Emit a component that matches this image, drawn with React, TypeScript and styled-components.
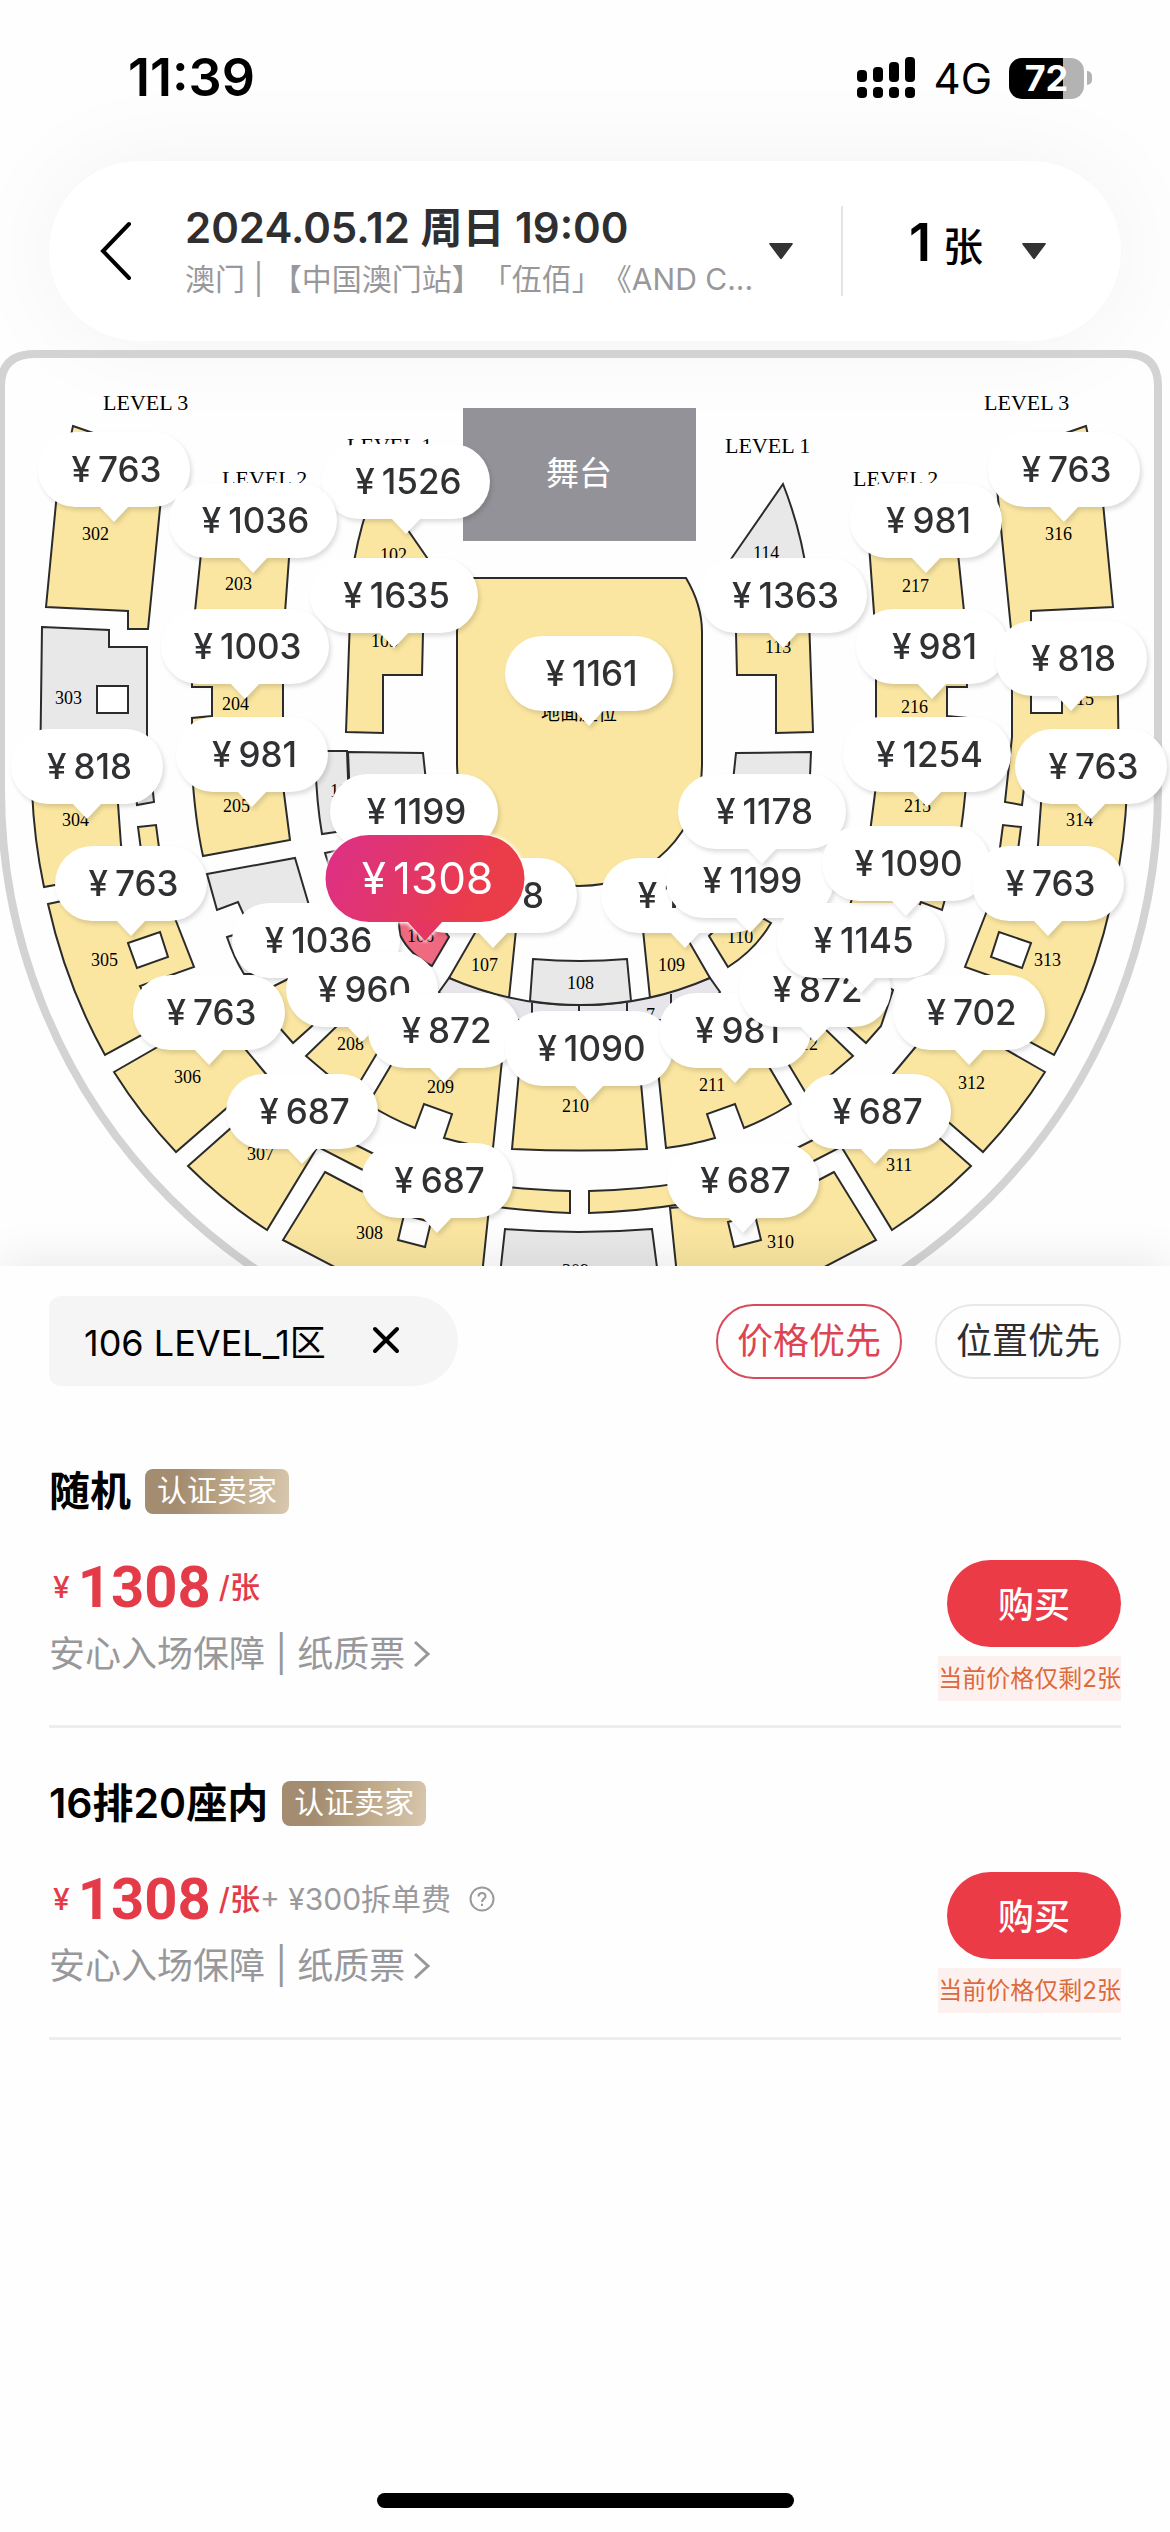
import React, { useState } from "react";
import styled, { createGlobalStyle, css } from "styled-components";

const GlobalStyle = createGlobalStyle`
  * { box-sizing: border-box; }
  body { margin: 0; background: #fefefe; }
  button { font: inherit; color: inherit; border: 0; padding: 0; background: none; cursor: pointer; }
  h2, p { margin: 0; }
`;

const Page = styled.main`
  min-height: 100vh;
  display: flex;
  flex-direction: column;
  background: #fefefe;
  color: #000;
  font-family: Inter, "Noto Sans CJK SC", sans-serif;
  overflow: hidden;
`;

/* ---------- status bar ---------- */

const StatusBar = styled.div`
  height: 161px;
  padding: 42px 78px 0 128px;
  display: flex;
  justify-content: space-between;
  align-items: flex-start;
`;

const Clock = styled.time`
  font-size: 52px;
  line-height: 72px;
  font-weight: 600;
`;

const StatusIcons = styled.div`
  height: 72px;
  display: flex;
  align-items: center;
  gap: 17px;
  font-size: 42px;
`;

const Battery = styled.span`
  display: flex;
  align-items: center;
  gap: 3px;
`;

const BatteryCell = styled.span<{ $level: number }>`
  width: 75px;
  height: 41px;
  border-radius: 13px;
  background: linear-gradient(to right, #000 ${(p) => p.$level}%, #b3b3b3 ${(p) => p.$level}%);
  color: #fff;
  font-size: 36px;
  line-height: 41px;
  font-weight: 700;
  text-align: center;
`;

const BatteryNub = styled.span`
  width: 5px;
  height: 14px;
  border-radius: 0 5px 5px 0;
  background: #b3b3b3;
`;

/* ---------- header card ---------- */

const Header = styled.header`
  margin: 0 49px;
  height: 180px;
  padding: 0 75px 0 48px;
  border-radius: 90px;
  background: #fff;
  box-shadow: 0 0 100px rgba(0, 0, 0, 0.05);
  display: flex;
  align-items: center;
`;

const BackButton = styled.button`
  width: 88px;
  height: 88px;
  flex: none;
  display: flex;
  align-items: center;
`;

const SessionButton = styled.button`
  flex: 1;
  min-width: 0;
  display: flex;
  align-items: center;
  gap: 12px;
  text-align: left;
`;

const SessionText = styled.span`
  flex: 1;
  min-width: 0;
  padding-top: 2px;
  display: flex;
  flex-direction: column;
`;

const SessionDate = styled.span`
  font-size: 42px;
  line-height: 54px;
  font-weight: 600;
  color: #2f2f31;
`;

const SessionName = styled.span`
  font-size: 30px;
  line-height: 48px;
  color: #98989b;
  white-space: nowrap;
  text-spacing-trim: space-all;
`;

const HeaderRule = styled.span`
  width: 2px;
  height: 90px;
  margin: 0 66px 0 48px;
  background: #e4e4e4;
`;

const CountButton = styled.button`
  display: flex;
  align-items: center;
  gap: 39px;
`;

const Count = styled.span`
  display: flex;
  align-items: baseline;
  gap: 12px;
  font-size: 40px;
  line-height: 72px;
  font-weight: 500;
  padding-bottom: 12px;

  b {
    font-size: 52px;
    font-weight: 600;
  }
`;

/* ---------- seat map ---------- */

const MapView = styled.section`
  margin-top: 9px;
  display: flex;
  justify-content: center;
  overflow: hidden;
`;

const MapCanvas = styled.div`
  position: relative;
  flex: none;
  width: 1170px;
  height: 916px;

  svg {
    display: block;
  }
`;

const Pin = styled.button<{ $x: number; $y: number; $wide: boolean; $active: boolean }>`
  position: absolute;
  left: ${(p) => p.$x}px;
  top: ${(p) => p.$y}px;
  transform: translateX(-50%);
  width: ${(p) => (p.$wide ? 168 : 152)}px;
  height: 75px;
  padding-left: 5px;
  border-radius: 38px;
  background: #fff;
  color: #303133;
  display: flex;
  justify-content: center;
  align-items: center;
  gap: 7px;
  font-size: 35px;
  line-height: 75px;
  font-weight: 500;
  white-space: nowrap;
  filter: drop-shadow(2px 3px 2px rgba(0, 0, 0, 0.13));

  &::after {
    content: "";
    position: absolute;
    left: 50%;
    top: 100%;
    width: 30px;
    height: 16px;
    margin: -1px 0 0 -15px;
    background: inherit;
    clip-path: polygon(0 0, 100% 0, 50% 100%);
  }

  ${(p) =>
    p.$active &&
    css`
      width: 199px;
      height: 87px;
      border-radius: 44px;
      background: linear-gradient(115deg, #dc2f88 0%, #e2366a 40%, #eb3c4a 75%);
      color: #fff;
      font-size: 44px;
      font-weight: 400;
      z-index: 1;
      filter: drop-shadow(0 0 2px #fff) drop-shadow(0 0 1px #fff);

      &::after {
        width: 36px;
        height: 20px;
        margin-left: -18px;
        background: #e43660;
      }
    `}
`;

/* ---------- offers ---------- */

const Panel = styled.section`
  position: relative;
  z-index: 2;
  flex: 1;
  padding: 30px 49px 24px;
  background: #fefefe;
  box-shadow: 0 -4px 44px rgba(0, 0, 0, 0.09);
  display: flex;
  flex-direction: column;
  gap: 30px;
`;

const Filters = styled.div`
  display: flex;
  align-items: center;
  gap: 33px;
`;

const AreaChip = styled.span`
  height: 90px;
  margin-right: auto;
  padding: 0 58px 2px 35px;
  border-radius: 12px 45px 45px 12px;
  background: #f5f5f5;
  display: flex;
  align-items: center;
  gap: 46px;
  font-size: 36px;
`;

const ClearButton = styled.button`
  display: flex;
`;

const SortButton = styled.button<{ $on: boolean }>`
  width: 186px;
  height: 75px;
  border: 2px solid ${(p) => (p.$on ? "#d94a5c" : "#e8e8e8")};
  border-radius: 38px;
  color: ${(p) => (p.$on ? "#dc4453" : "#2e2e30")};
  font-size: 36px;
  line-height: 71px;
`;

const OfferList = styled.ul`
  margin: 0;
  padding: 0;
  list-style: none;
`;

const Offer = styled.li`
  padding: 53px 0 24px;
  border-bottom: 3px solid #ededed;
  display: flex;
  flex-direction: column;
  gap: 46px;
`;

const OfferTitle = styled.div`
  height: 45px;
  display: flex;
  align-items: center;
  gap: 14px;

  h2 {
    font-size: 41px;
    line-height: 45px;
    font-weight: 600;
  }
`;

const SellerBadge = styled.span`
  height: 45px;
  padding: 0 12px;
  border-radius: 8px;
  background: linear-gradient(100deg, #a38c70 25%, #bfa98a 60%, #d8c8ae);
  color: #fff;
  font-size: 30px;
  line-height: 43px;
`;

const OfferBody = styled.div`
  display: flex;
  justify-content: space-between;
`;

const OfferInfo = styled.div`
  display: flex;
  flex-direction: column;
  align-items: flex-start;
  gap: 16px;
`;

const PriceLine = styled.p`
  height: 54px;
  display: flex;
  align-items: center;
  padding-left: 4px;
  color: #e43b49;
  font-size: 30px;
  line-height: 54px;
  font-weight: 500;
`;

const Amount = styled.strong`
  margin: 0 8px;
  font-family: Roboto, sans-serif;
  font-size: 58px;
  font-weight: 700;
`;

const Fee = styled.span`
  color: #9a9a9d;
  font-weight: 400;
`;

const HelpButton = styled.button`
  margin-left: 18px;
  display: flex;
`;

const Guarantee = styled.button`
  display: flex;
  align-items: center;
  gap: 8px;
  color: #98989b;
  font-size: 36px;
  line-height: 48px;
`;

const Purchase = styled.div`
  display: flex;
  flex-direction: column;
  align-items: flex-end;
  gap: 9px;
`;

const BuyButton = styled.button`
  width: 174px;
  height: 87px;
  padding-bottom: 4px;
  border-radius: 44px;
  background: #eb3b47;
  color: #fff;
  font-size: 36px;
  font-weight: 500;
`;

const StockNote = styled.span`
  height: 45px;
  background: #fdf1ef;
  color: #dd6a3c;
  font-size: 24px;
  line-height: 45px;
`;

const HomeIndicator = styled.div`
  width: 417px;
  height: 15px;
  margin: auto auto 0;
  border-radius: 8px;
  background: #000;
`;

/* ---------- data ---------- */

const SEAT = "#fae6a1";
const EMPTY = "#e8e8e8";
const CHOSEN = "#ef6a80";

// Outlines for the left half of the hall; the right half is the same set mirrored.
const sections: { d: string; left: string | null; right: string | null }[] = [
  { d: "M73 426 165 458 148 629H128V611L46 607 56 503Z", left: SEAT, right: SEAT },
  { d: "M42 627 109 630V647H147V737L154 802 137 805 134 780H40Z", left: EMPTY, right: SEAT },
  { d: "M97 686H128V713H97Z", left: "#fff", right: "#fff" },
  { d: "M32 790H117L121 845 125 872 44 887Q34 840 32 790Z", left: SEAT, right: SEAT },
  { d: "M138 827 156 825 162 870 144 873Z", left: SEAT, right: SEAT },
  { d: "M48 904 160 880 176 921 194 967 140 986 160 1025 105 1055Q66 985 48 904Z", left: SEAT, right: SEAT },
  { d: "M128 943 160 932 168 957 137 968Z", left: "#fff", right: "#fff" },
  { d: "M114 1072 175 1037 236 1038 266 1074 176 1152Q141 1115 114 1072Z", left: SEAT, right: SEAT },
  { d: "M188 1166 240 1120 318 1146 267 1230Q225 1203 188 1166Z", left: SEAT, right: SEAT },
  { d: "M325 1172 361 1191 400 1200 489 1208 482 1275H350L283 1240Z", left: SEAT, right: SEAT },
  { d: "M336 1135 372 1153Q450 1188 570 1191V1213Q440 1208 361 1169L318 1147Z", left: SEAT, right: SEAT },
  { d: "M404 1215 398 1240 425 1247 431 1222Z", left: "#fff", right: "#fff" },
  { d: "M205 515H292L289 558 283 640H192Z", left: SEAT, right: SEAT },
  { d: "M192 650H283V730H192V718L212 716V687H192Z", left: SEAT, right: SEAT },
  { d: "M192 770H281L290 840 203 856Q195 820 192 770Z", left: SEAT, right: SEAT },
  { d: "M207 874 295 858 308 902 320 940H255L238 902 217 910Z", left: EMPTY, right: SEAT },
  { d: "M227 937 250 930 270 974H244Q234 958 227 937Z", left: EMPTY, right: null },
  { d: "M266 990 300 973 325 1010 312 1026 293 1043 278 1026Z", left: SEAT, right: SEAT },
  { d: "M306 1056 340 1023 388 1035 352 1095Z", left: SEAT, right: SEAT },
  { d: "M368 1104 400 1050H503L493 1148Q468 1145 444 1138L452 1114 424 1104 415 1128Q390 1118 368 1104Z", left: SEAT, right: SEAT },
  { d: "M376 484 430 562V575H352Q358 530 376 484Z", left: SEAT, right: EMPTY },
  { d: "M351 590H424L422 675H383V733L346 732Z", left: SEAT, right: SEAT },
  { d: "M348 752 423 753 428 800H350Z", left: EMPTY, right: EMPTY },
  { d: "M315 751H347L350 830 322 834Q316 800 315 751Z", left: EMPTY, right: null },
  { d: "M325 853 360 846 380 900H340Z", left: EMPTY, right: null },
  { d: "M449 978 475 933 478 920H517L509 998Q478 993 449 978Z", left: SEAT, right: SEAT },
];

const singles: { d: string; fill: string }[] = [
  { d: "M449 978Q515 1006 579 1005 645 1006 710 978L720 992 700 1020H455L439 992Z", fill: "#e7e5e9" },
  { d: "M532 1003V1020M579 1005V1020M627 1003V1020M671 994V1010", fill: "none" },
  { d: "M533 959Q580 963 627 959L631 1001Q580 1009 530 1001Z", fill: EMPTY },
  { d: "M398 912 430 910 449 937 432 966Q410 955 400 935Z", fill: CHOSEN },
  { d: "M709 936 728 967Q755 950 771 923L764 919 730 915Z", fill: SEAT },
  { d: "M521 1050H638L647 1149Q580 1152 512 1149Z", fill: SEAT },
  { d: "M505 1229Q579 1235 652 1229L658 1275H500Z", fill: EMPTY },
  {
    d: "M472 578H686Q702 605 702 632V765C702 830 650 886 579 886 508 886 457 830 457 765V632Q457 605 472 578Z",
    fill: SEAT,
  },
];

const labels: [number, number, string][] = [
  [82, 540, "302"], [1045, 540, "316"], [225, 590, "203"], [902, 592, "217"],
  [55, 704, "303"], [1067, 705, "315"], [222, 710, "204"], [901, 713, "216"],
  [223, 812, "205"], [904, 812, "215"], [380, 561, "102"], [753, 559, "114"],
  [371, 647, "103"], [765, 653, "113"], [62, 826, "304"], [1066, 826, "314"],
  [91, 966, "305"], [1034, 966, "313"], [174, 1083, "306"], [958, 1089, "312"],
  [247, 1160, "307"], [886, 1171, "311"], [356, 1239, "308"], [767, 1248, "310"],
  [337, 1050, "208"], [791, 1050, "212"], [427, 1093, "209"], [699, 1091, "211"],
  [562, 1112, "210"], [562, 1277, "309"], [330, 797, "104"], [407, 942, "106"],
  [471, 971, "107"], [567, 989, "108"], [658, 971, "109"], [727, 943, "110"],
  [646, 1021, "7"],
];

const levels: [number, number, string][] = [
  [103, 410, "LEVEL 3"], [222, 486, "LEVEL 2"], [347, 453, "LEVEL 1"],
  [725, 453, "LEVEL 1"], [853, 486, "LEVEL 2"], [984, 410, "LEVEL 3"],
];

const MAP_TOP = 350;

// Tip x, bubble top, price; later pins lie over earlier ones.
const pins: [number, number, number][] = [
  [114, 432, 763], [406, 444, 1526], [253, 483, 1036], [394, 558, 1635],
  [245, 609, 1003], [252, 717, 981], [87, 729, 818], [414, 774, 1199],
  [589, 636, 1161], [783, 558, 1363], [926, 483, 981], [1064, 432, 763],
  [932, 609, 981], [1071, 621, 818], [927, 717, 1254], [1091, 729, 763],
  [493, 858, 1178], [685, 858, 1199], [750, 843, 1199], [762, 774, 1178],
  [316, 903, 1036], [362, 952, 960], [444, 993, 872], [589, 1011, 1090],
  [735, 993, 981], [815, 952, 872], [861, 903, 1145], [906, 826, 1090],
  [131, 846, 763], [209, 975, 763], [302, 1074, 687], [437, 1143, 687],
  [743, 1143, 687], [875, 1074, 687], [969, 975, 702], [1048, 846, 763],
];

const offers = [
  { title: "随机", price: 1308, fee: 0, left: 2 },
  { title: "16排20座内", price: 1308, fee: 300, left: 2 },
];

/* ---------- parts ---------- */

const Caret = () => (
  <svg width="24" height="17" viewBox="0 0 24 17" aria-hidden="true">
    <path d="M1 0H23Q24.500 0 23.500 1.500L13 15.500Q12 17 11 15.500L.5 1.500Q-.5 0 1 0Z" fill="#333" />
  </svg>
);

const Signal = () => (
  <svg width="60" height="42" viewBox="0 0 60 42" aria-hidden="true">
    {[13, 10, 5, 0].map((top, i) => (
      <g key={top}>
        <rect x={i * 16} y={top} width="10" height={25 - top} rx="4" />
        <rect x={i * 16} y="30" width="10" height="11" rx="4" />
      </g>
    ))}
  </svg>
);

function Hall() {
  return (
    <svg width="1170" height="916" viewBox="0 350 1170 916" aria-label="座位图">
      <path
        d="M1 790V386Q1 354 35 354H1126Q1158 354 1158 386V790A578.500 578.500 0 0 1 1 790Z"
        fill="none"
        stroke="#d3d3d3"
        strokeWidth="8"
      />
      <g stroke="#2b2b2b" strokeWidth="2">
        {sections.map((s) => s.left && <path key={s.d} d={s.d} fill={s.left} />)}
        <g transform="translate(1159 0) scale(-1 1)">
          {sections.map((s) => s.right && <path key={s.d} d={s.d} fill={s.right} />)}
        </g>
        {singles.map((s) => (
          <path key={s.d} d={s.d} fill={s.fill} />
        ))}
      </g>
      <rect x="463" y="408" width="233" height="133" fill="#939299" />
      <text x="579" y="485" fontSize="33" fill="#fff" textAnchor="middle">
        舞台
      </text>
      <text x="579" y="720" fontSize="19" textAnchor="middle">
        地面座位
      </text>
      <g fontFamily='"Liberation Serif", serif' fontSize="18">
        {labels.map(([x, y, t]) => (
          <text key={t} x={x} y={y}>
            {t}
          </text>
        ))}
      </g>
      <g fontFamily='"Liberation Serif", serif' fontSize="22">
        {levels.map(([x, y, t]) => (
          <text key={x} x={x} y={y}>
            {t}
          </text>
        ))}
      </g>
    </svg>
  );
}

export default function App() {
  const [sort, setSort] = useState("价格优先");

  return (
    <Page>
      <GlobalStyle />
      <StatusBar>
        <Clock>11:39</Clock>
        <StatusIcons>
          <Signal />
          <span>4G</span>
          <Battery>
            <BatteryCell $level={72}>72</BatteryCell>
            <BatteryNub />
          </Battery>
        </StatusIcons>
      </StatusBar>

      <Header>
        <BackButton aria-label="返回">
          <svg width="38" height="60" viewBox="0 0 38 60" fill="none" stroke="#000" strokeWidth="4" strokeLinecap="round" aria-hidden="true">
            <path d="M32 3 6 30 32 57" />
          </svg>
        </BackButton>
        <SessionButton>
          <SessionText>
            <SessionDate>2024.05.12 周日 19:00</SessionDate>
            <SessionName>澳门 | 【中国澳门站】「伍佰」《AND C...</SessionName>
          </SessionText>
          <Caret />
        </SessionButton>
        <HeaderRule />
        <CountButton>
          <Count>
            <b>1</b>张
          </Count>
          <Caret />
        </CountButton>
      </Header>

      <MapView>
        <MapCanvas>
          <Hall />
          {pins.map(([x, y, price]) => (
            <Pin key={`${x}-${y}`} $x={x} $y={y - MAP_TOP} $wide={price > 999} $active={false}>
              <span>¥</span>
              <span>{price}</span>
            </Pin>
          ))}
          <Pin $x={425} $y={835 - MAP_TOP} $wide $active>
            <span>¥</span>
            <span>1308</span>
          </Pin>
        </MapCanvas>
      </MapView>

      <Panel>
        <Filters>
          <AreaChip>
            106 LEVEL_1区
            <ClearButton aria-label="清除区域">
              <svg width="28" height="28" viewBox="0 0 28 28" stroke="#000" strokeWidth="4" strokeLinecap="round" aria-hidden="true">
                <path d="M3 3 25 25M25 3 3 25" />
              </svg>
            </ClearButton>
          </AreaChip>
          {["价格优先", "位置优先"].map((name) => (
            <SortButton key={name} $on={name === sort} onClick={() => setSort(name)}>
              {name}
            </SortButton>
          ))}
        </Filters>

        <OfferList>
          {offers.map((o) => (
            <Offer key={o.title}>
              <OfferTitle>
                <h2>{o.title}</h2>
                <SellerBadge>认证卖家</SellerBadge>
              </OfferTitle>
              <OfferBody>
                <OfferInfo>
                  <PriceLine>
                    ¥<Amount>{o.price}</Amount>/张
                    {o.fee > 0 && (
                      <>
                        <Fee>+ ¥{o.fee}拆单费</Fee>
                        <HelpButton aria-label="拆单费说明">
                          <svg width="26" height="26" viewBox="0 0 26 26" fill="none" stroke="#9a9a9d" strokeWidth="2" aria-hidden="true">
                            <circle cx="13" cy="13" r="11.500" />
                            <path d="M9.500 10.500C9.500 6 16.500 6 16.500 10.200 16.500 13 13 12.800 13 16M13 17.800V20" />
                          </svg>
                        </HelpButton>
                      </>
                    )}
                  </PriceLine>
                  <Guarantee>
                    安心入场保障 | 纸质票
                    <svg width="18" height="28" viewBox="0 0 18 28" fill="none" stroke="#98989b" strokeWidth="3" aria-hidden="true">
                      <path d="M2 2 15 14 2 26" />
                    </svg>
                  </Guarantee>
                </OfferInfo>
                <Purchase>
                  <BuyButton>购买</BuyButton>
                  <StockNote>当前价格仅剩{o.left}张</StockNote>
                </Purchase>
              </OfferBody>
            </Offer>
          ))}
        </OfferList>
        <HomeIndicator />
      </Panel>
    </Page>
  );
}
